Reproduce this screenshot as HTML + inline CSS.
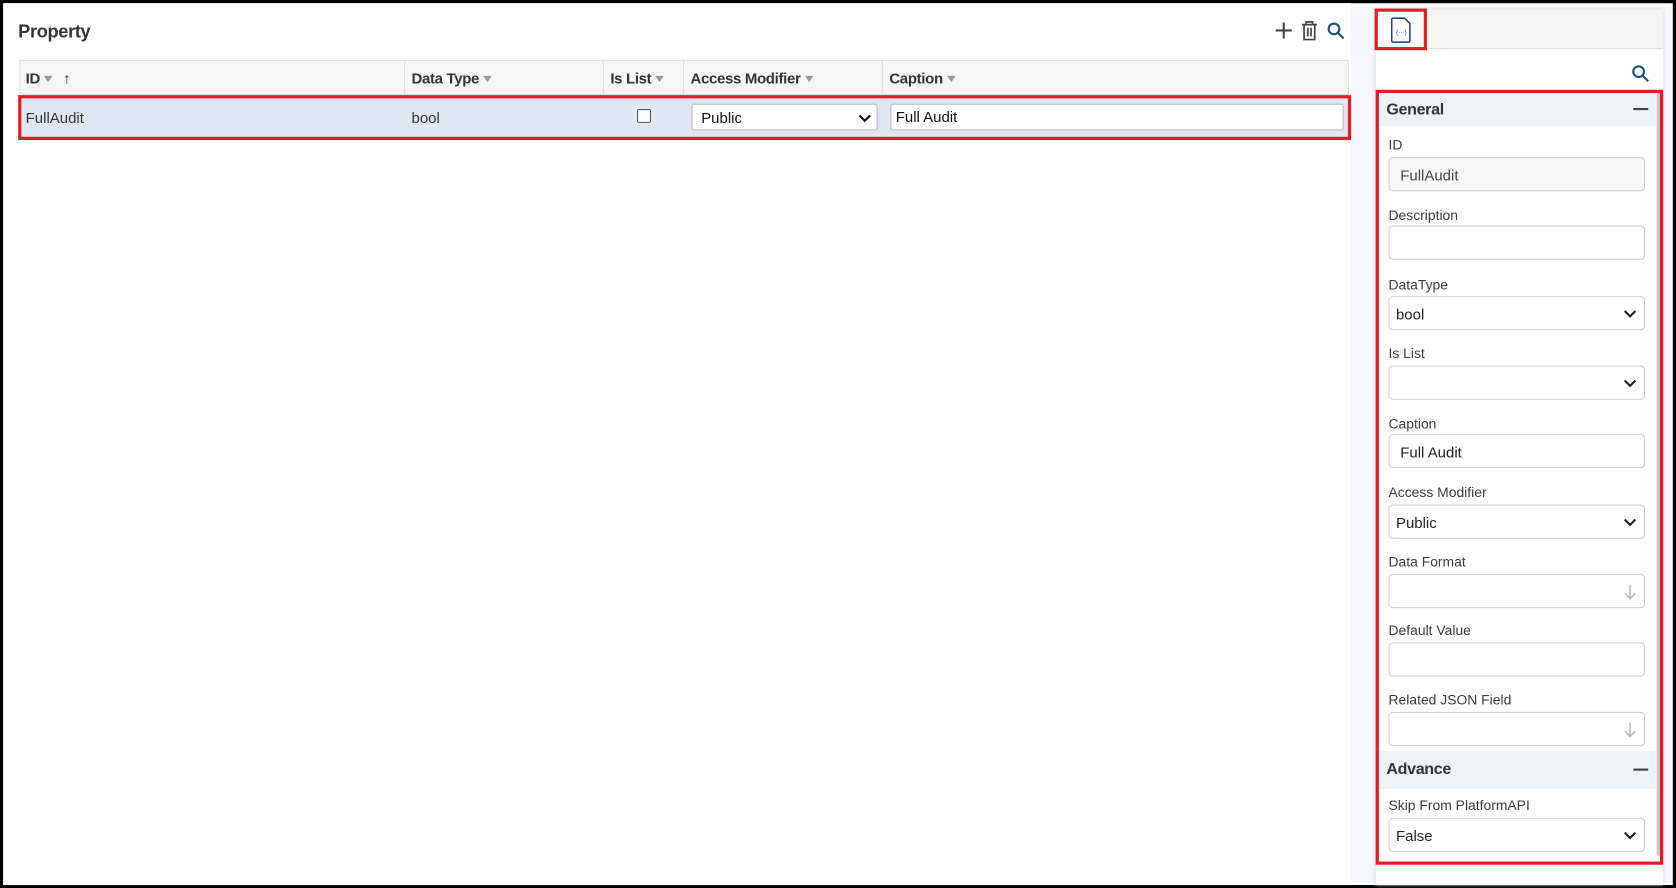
<!DOCTYPE html>
<html><head><style>
*{box-sizing:border-box;margin:0;padding:0}
body{width:1676px;height:888px;background:#000;position:relative;overflow:hidden;font-family:"Liberation Sans",sans-serif;color:#333}
#w{position:absolute;left:0;top:0;width:1568px;height:831px;transform:scale(1.0689);transform-origin:0 0}
.a{position:absolute}
.lbl{position:absolute;left:1299px;font-size:13px;color:#3a3a3a}
.inp{position:absolute;left:1299px;width:240px;height:32px;border:1px solid #cfcfcf;border-radius:4px;background:#fff;font-size:14px;padding:8px 10px;color:#222}
.chev{position:absolute;right:6px;top:8px;width:14px;height:14px}
.th{position:absolute;top:57px;height:32px;font-size:14px;font-weight:bold;color:#333;padding:8px 6px;border-right:1px solid #ddd;letter-spacing:-0.3px}
.f{display:inline-block;width:0;height:0;border-left:4px solid transparent;border-right:4px solid transparent;border-top:6px solid #999;margin-left:4px;vertical-align:1px}
</style></head><body><div id="w">
<div class="a" style="left:3px;top:3px;width:1562px;height:825px;background:#f5f8fc"></div>
<div class="a" style="left:3px;top:3px;width:1261px;height:825px;background:#fff"></div>
<div class="a" style="left:17px;top:20px;font-size:17px;font-weight:bold;color:#333;letter-spacing:-0.3px">Property</div>
<svg class="a" style="left:1192px;top:18px" width="70" height="22" viewBox="0 0 70 22">
<path d="M9 3v15M1.5 10.5h15" stroke="#444" stroke-width="2"/>
<path d="M26 5h14M30 5V2.5h6V5M28 5v14h10V5M31.5 8v8M34.5 8v8" stroke="#444" stroke-width="1.6" fill="none"/>
<circle cx="56" cy="9" r="5" stroke="#1e4e79" stroke-width="2" fill="none"/><path d="M60 13l5 5" stroke="#1e4e79" stroke-width="2"/>
</svg>
<div class="a" style="left:18px;top:56px;width:1244px;height:33px;background:#f6f6f6;border:1px solid #ddd"></div>
<div class="th" style="left:18px;width:361px">ID<span class="f"></span> <span style="font-weight:normal;margin-left:6px">↑</span></div>
<div class="th" style="left:379px;width:186px">Data Type<span class="f"></span></div>
<div class="th" style="left:565px;width:75px">Is List<span class="f"></span></div>
<div class="th" style="left:640px;width:186px">Access Modifier<span class="f"></span></div>
<div class="th" style="left:826px;width:200px;border:none">Caption<span class="f"></span></div>
<div class="a" style="left:17px;top:89px;width:1247px;height:42px;background:#dfe7f4;border:3px solid #e31c23"></div>
<div class="a" style="left:24px;top:102px;font-size:14px">FullAudit</div>
<div class="a" style="left:385px;top:102px;font-size:14px">bool</div>
<div class="a" style="left:596px;top:102px;width:13px;height:13px;border:1px solid #555;border-radius:2px;background:#fff"></div>
<div class="a" style="left:647px;top:97px;width:174px;height:25px;border:1px solid #bbb;border-radius:2px;background:#fff;font-size:14px;padding:4px 8px;color:#111">Public<svg class="chev" style="top:5px;right:4px" viewBox="0 0 14 14"><path d="M2 5l5 5 5-5" stroke="#111" stroke-width="2" fill="none"/></svg></div>
<div class="a" style="left:833px;top:97px;width:424px;height:25px;border:1px solid #bbb;border-radius:2px;background:#fff;font-size:14px;padding:3px 4px;color:#111">Full Audit</div>
<div class="a" style="left:1287px;top:9px;width:269px;height:819px;background:#fff;box-shadow:0 0 3px #ccc"></div>
<div class="a" style="left:1287px;top:9px;width:269px;height:37px;background:#f4f4f4;border-bottom:1px solid #ddd"></div>
<div class="a" style="left:1286px;top:8px;width:49px;height:39px;background:#fff;border:3px solid #e31c23"></div>
<svg class="a" style="left:1299px;top:15px" width="24" height="26" viewBox="0 0 24 26"><path d="M4 2h11l5 5v16a1.5 1.5 0 0 1-1.5 1.5h-14A1.5 1.5 0 0 1 3 23V3.5A1.5 1.5 0 0 1 4 2z" stroke="#1e4e79" stroke-width="1.5" fill="none"/><text x="12" y="17" font-size="6" text-anchor="middle" fill="#1e4e79" font-family="Liberation Sans">{···}</text></svg>
<svg class="a" style="left:1526px;top:60px" width="18" height="18" viewBox="0 0 18 18"><circle cx="7" cy="7" r="5" stroke="#1e4e79" stroke-width="2" fill="none"/><path d="M11 11l5 5" stroke="#1e4e79" stroke-width="2"/></svg>
<div class="a" style="left:1550px;top:86px;width:6px;height:715px;background:#c4c4c4;border-radius:3px"></div>
<div class="a" style="left:1289px;top:86px;width:260px;height:32px;background:#edf3f7"></div>
<div class="a" style="left:1297px;top:94px;font-size:15px;font-weight:bold;color:#333;letter-spacing:-0.3px">General</div>
<div class="a" style="left:1528px;top:101px;width:14px;height:2px;background:#444"></div>
<div class="a" style="left:1289px;top:703px;width:260px;height:35px;background:#edf3f7"></div>
<div class="a" style="left:1297px;top:711px;font-size:15px;font-weight:bold;color:#333;letter-spacing:-0.3px">Advance</div>
<div class="a" style="left:1528px;top:719px;width:14px;height:2px;background:#444"></div>
<div class="lbl" style="top:128px">ID</div>
<div class="inp" style="top:147px;background:#f7f7f7;color:#444">FullAudit</div>
<div class="lbl" style="top:194px">Description</div>
<div class="inp" style="top:211px"></div>
<div class="lbl" style="top:259px">DataType</div>
<div class="inp" style="top:277px;padding-left:6px">bool<svg class="chev" viewBox="0 0 14 14"><path d="M2 5l5 5 5-5" stroke="#222" stroke-width="2" fill="none"/></svg></div>
<div class="lbl" style="top:323px">Is List</div>
<div class="inp" style="top:342px"><svg class="chev" viewBox="0 0 14 14"><path d="M2 5l5 5 5-5" stroke="#222" stroke-width="2" fill="none"/></svg></div>
<div class="lbl" style="top:389px">Caption</div>
<div class="inp" style="top:406px">Full Audit</div>
<div class="lbl" style="top:453px">Access Modifier</div>
<div class="inp" style="top:472px;padding-left:6px">Public<svg class="chev" viewBox="0 0 14 14"><path d="M2 5l5 5 5-5" stroke="#222" stroke-width="2" fill="none"/></svg></div>
<div class="lbl" style="top:518px">Data Format</div>
<div class="inp" style="top:537px"><svg class="chev" viewBox="0 0 14 16" style="height:16px"><path d="M7 1v13M2 9l5 5 5-5" stroke="#bbb" stroke-width="1.5" fill="none"/></svg></div>
<div class="lbl" style="top:582px">Default Value</div>
<div class="inp" style="top:601px"></div>
<div class="lbl" style="top:647px">Related JSON Field</div>
<div class="inp" style="top:666px"><svg class="chev" viewBox="0 0 14 16" style="height:16px"><path d="M7 1v13M2 9l5 5 5-5" stroke="#bbb" stroke-width="1.5" fill="none"/></svg></div>
<div class="lbl" style="top:746px">Skip From PlatformAPI</div>
<div class="inp" style="top:765px;padding-left:6px">False<svg class="chev" viewBox="0 0 14 14"><path d="M2 5l5 5 5-5" stroke="#222" stroke-width="2" fill="none"/></svg></div>
<div class="a" style="left:1287px;top:84px;width:269px;height:725px;border:3px solid #e31c23"></div>
</div></body></html>
